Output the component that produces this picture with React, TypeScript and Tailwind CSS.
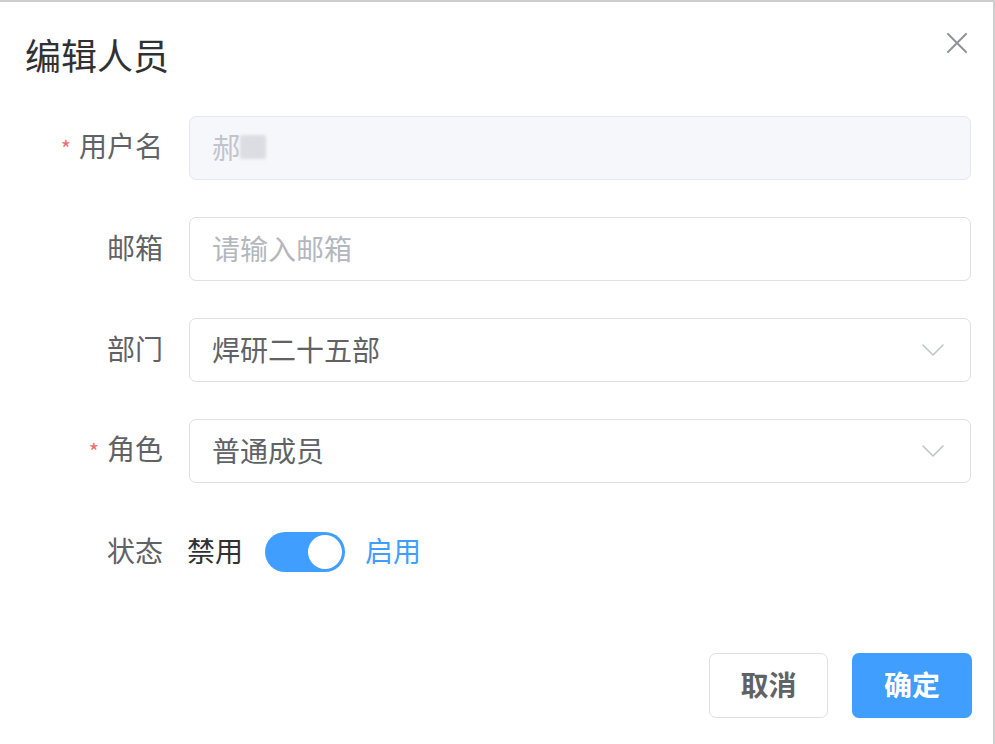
const font = {
	fontFamily: '"Noto Sans CJK SC", "Noto Sans", sans-serif',
};

function Label({ text, required }: { text: string; required?: boolean }) {
	return (
		<div className="mb-[4px] w-[163px] shrink-0 text-right text-[28px] leading-[38px] text-[#606266]">
			{required && (
				<span className="mr-[8px] text-[22px] text-[#f56c6c]">*</span>
			)}
			{text}
		</div>
	);
}

function Chevron() {
	return (
		<svg width="22" height="12" viewBox="0 0 22 12" fill="none">
			<polyline
				points="1,1 11,11 21,1"
				stroke="#c0c4cc"
				strokeWidth="1.6"
				strokeLinecap="round"
				strokeLinejoin="round"
			/>
		</svg>
	);
}

function SelectBox({ value }: { value: string }) {
	return (
		<div className="flex h-[64px] w-[782px] items-center justify-between rounded-[7px] border-[1.5px] border-[#dcdfe6] bg-white pl-[22px] pr-[26px]">
			<span className="mb-[3px] text-[28px] leading-[38px] text-[#606266]">{value}</span>
			<Chevron />
		</div>
	);
}

export default function App() {
	return (
		<div
			style={font}
			className="h-[744px] w-[995px] border-r-2 border-t-2 border-[#cdcdcd] bg-white"
		>
			<div className="flex items-start justify-between pl-[25px] pr-[26px] pt-[30px]">
				<div className="text-[36px] leading-[44px] text-[#303133]">编辑人员</div>
				<button className="mt-[1px]">
					<svg width="20" height="20" viewBox="0 0 20 20">
						<path
							d="M1 1 L19 19 M19 1 L1 19"
							stroke="#909399"
							strokeWidth="2"
							strokeLinecap="round"
						/>
					</svg>
				</button>
			</div>

			<div className="mt-[40px] flex flex-col gap-[37px]">
				<div className="flex items-center gap-[26px]">
					<Label text="用户名" required />
					<div className="flex h-[64px] w-[782px] items-center rounded-[7px] border-[1.5px] border-[#e4e7ed] bg-[#f5f7fa] px-[22px] pb-[3px]">
						<span className="text-[28px] leading-[38px] text-[#c0c4cc]">郝</span>
						<span className="inline-block h-[24px] w-[26px] rounded-[2px] bg-[#dcdde2] blur-[1.5px]" />
					</div>
				</div>

				<div className="flex items-center gap-[26px]">
					<Label text="邮箱" />
					<div className="flex h-[64px] w-[782px] items-center rounded-[7px] border-[1.5px] border-[#dcdfe6] bg-white px-[22px] pb-[3px]">
						<span className="text-[28px] leading-[38px] text-[#b4b7bd]">请输入邮箱</span>
					</div>
				</div>

				<div className="flex items-center gap-[26px]">
					<Label text="部门" />
					<SelectBox value="焊研二十五部" />
				</div>

				<div className="flex items-center gap-[26px]">
					<Label text="角色" required />
					<SelectBox value="普通成员" />
				</div>

				<div className="flex h-[64px] items-center gap-[24px]">
					<Label text="状态" />
					<div className="flex items-center">
						<span className="mb-[4px] text-[28px] leading-[38px] text-[#303133]">禁用</span>
						<div className="ml-[22px] flex h-[40px] w-[80px] items-center justify-end rounded-full bg-[#409eff] pr-[3px]">
							<div className="h-[34px] w-[34px] rounded-full bg-white" />
						</div>
						<span className="mb-[4px] ml-[20px] text-[28px] leading-[38px] text-[#409eff]">启用</span>
					</div>
				</div>
			</div>

			<div className="mt-[69px] flex justify-end gap-[24px] pr-[21px]">
				<button className="h-[65px] w-[119px] rounded-[7px] border-[1.5px] border-[#dcdfe6] bg-white pb-[4px] text-[28px] font-bold text-[#606266]">
					取消
				</button>
				<button className="h-[65px] w-[120px] rounded-[7px] bg-[#409eff] pb-[4px] text-[28px] font-bold text-white">
					确定
				</button>
			</div>
		</div>
	);
}
